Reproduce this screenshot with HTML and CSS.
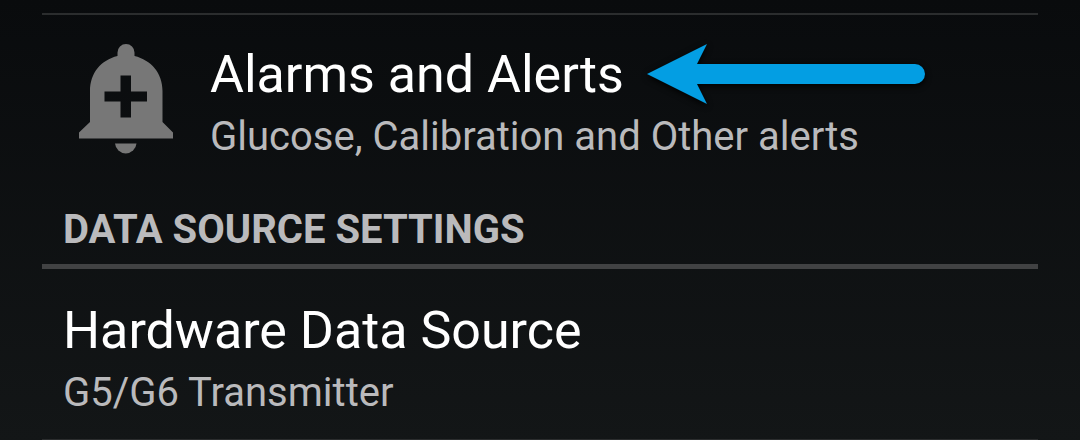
FILE: index.html
```html
<!DOCTYPE html>
<html lang="en">
<head>
<meta charset="utf-8">
<meta name="viewport" content="width=device-width, initial-scale=1">
<title>Settings</title>
<link rel="stylesheet" href="styles.css">
</head>
<body>
<main class="settings">
  <a class="row row-with-icon" href="#alarms">
    <svg class="bell" viewBox="0 0 96 112" aria-hidden="true">
      <path class="bell-shape" fill-rule="evenodd" d="M39.500 13V9.500a8.500 8.500 0 0 1 17 0V13C73 17 84.500 30 84.500 48v31L95 89.500V95.500H1V89.500L12 79V48C12 30 23 17 39.500 13ZM42.500 32.500V48.500H26.500V58.500H42.500V74.500H53V58.500H69V48.500H53V32.500Z"/>
      <path class="bell-shape" d="M37 100.500H58.500A10.800 11 0 0 1 37 100.500Z"/>
    </svg>
    <span class="row-text">
      <span class="title-line">
        <span class="title">Alarms and Alerts</span>
        <svg class="arrow" viewBox="0 0 280 62" aria-hidden="true">
          <path d="M0 30 60 0 50 20H268a10 10 0 0 1 0 20H50l10 20Z"/>
        </svg>
      </span>
      <span class="summary">Glucose, Calibration and Other alerts</span>
    </span>
  </a>
  <h2 class="section">DATA SOURCE SETTINGS</h2>
  <a class="row" href="#source">
    <span class="row-text">
      <span class="title">Hardware Data Source</span>
      <span class="summary">G5/G6 Transmitter</span>
    </span>
  </a>
</main>
</body>
</html>
```
FILE: styles.css
```css
* {
  box-sizing: border-box;
}

html {
  min-height: 100%;
  background: linear-gradient(#090b0d, #131617);
}

body {
  margin: 0;
  font-family: Roboto, sans-serif;
  color: #fff;
}

.settings {
  margin: 13px 42px 0;
  border-top: 2px solid #2b2d2e;
}

.row {
  display: flex;
  padding: 30px 21px 22px;
  color: inherit;
  text-decoration: none;
  border-bottom: 2px solid #2b2d2e;
}

.row-with-icon {
  gap: 36px;
  padding: 28px 36px 40px;
  border-bottom: 0;
}

.bell {
  flex: none;
  width: 96px;
  height: 112px;
}

.bell-shape {
  fill: #777;
}

.row-text {
  display: flex;
  flex-direction: column;
  gap: 6px;
}

.title-line {
  display: flex;
  align-items: center;
  gap: 23px;
}

.title {
  font-size: 52px;
  line-height: 64px;
  white-space: nowrap;
}

.summary {
  font-size: 40px;
  line-height: 48px;
  color: #bababc;
}

.arrow {
  flex: none;
  width: 280px;
  height: 62px;
  fill: #039ee3;
  overflow: visible;
  filter: drop-shadow(0 2px 3px #000);
}

.section {
  margin: 0;
  padding: 5px 21px 10px;
  font-size: 40px;
  line-height: 48px;
  font-weight: 700;
  color: #bababc;
  border-bottom: 5px solid #414243;
}
```
